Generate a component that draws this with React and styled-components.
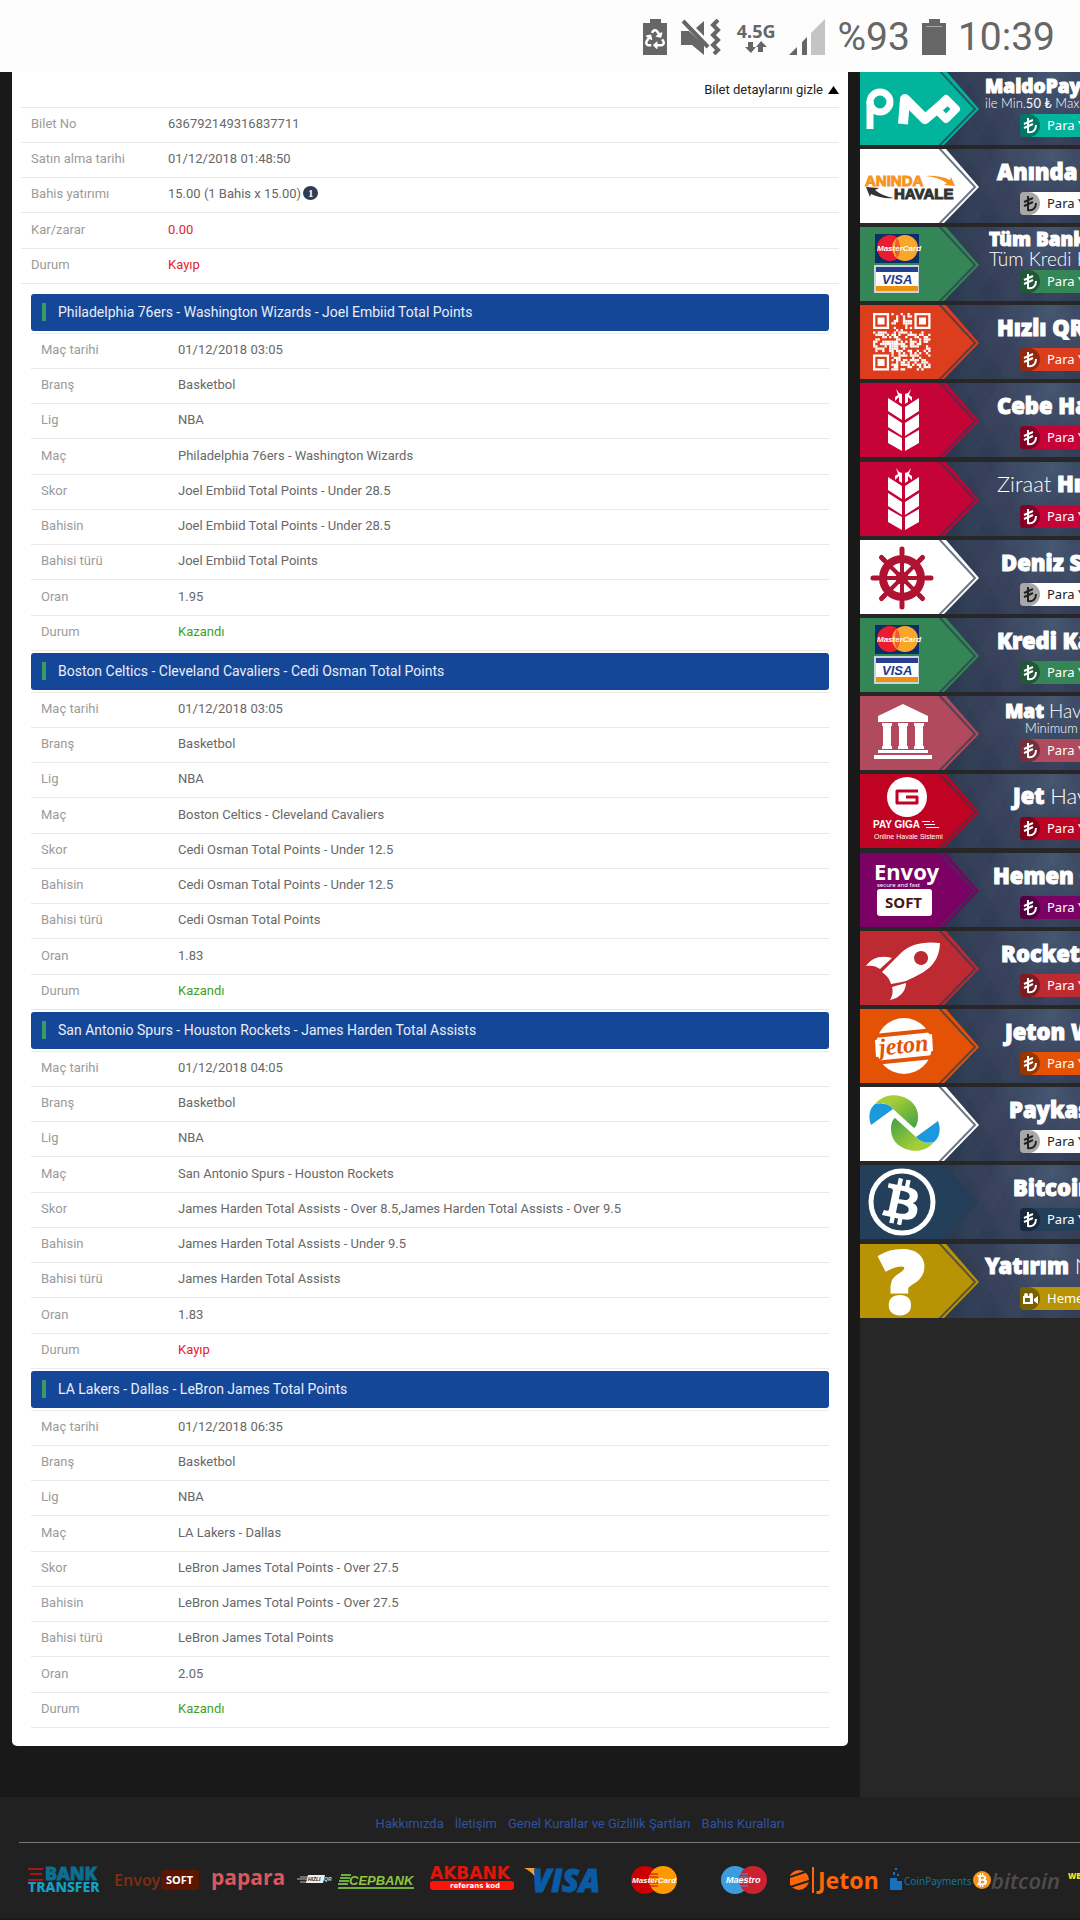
import React from 'react';
import styled, { createGlobalStyle, css } from 'styled-components';
import { FaBtc, FaRecycle } from 'react-icons/fa';

const GlobalStyle = createGlobalStyle`
  *, *::before, *::after {
    box-sizing: border-box;
  }

  body {
    margin: 0;
    background: #191919;
    font-family: Roboto, "Liberation Sans", sans-serif;
    font-size: 13px;
    line-height: 16px;
    overflow-x: hidden;
  }
`;

const titleFont = '"Noto Sans", "Open Sans", sans-serif';
const thinFont = 'Lato, "Open Sans", sans-serif';

/* ---------- status bar ---------- */

const StatusBar = styled.header`
  display: flex;
  align-items: center;
  justify-content: flex-end;
  gap: 12px;
  height: 72px;
  padding: 2px 25px 0;
  background: #fdfdfd;
  color: #666;
`;

const StatusIcons = styled.div`
  display: flex;
  align-items: center;
  gap: 14px;
`;

const StatusText = styled.span`
  font-size: 39px;
  line-height: 44px;
`;

const Network = styled.div`
  display: flex;
  flex-direction: column;
  align-items: center;
  font: 700 18px/20px ${titleFont};
`;

const BatteryShape = () => <path d="M0 4h7V0h11v4h6v32H0z" fill="#666" />;

const SavingIcon = () => (
  <svg width="24" height="36">
    <BatteryShape />
    <FaRecycle x="2" y="10" size={20} color="#fff" />
  </svg>
);

const BatteryIcon = () => (
  <svg width="24" height="36">
    <BatteryShape />
    <path d="M4 7.500h16" stroke="#aaa" />
  </svg>
);

const MuteIcon = () => (
  <svg width="42" height="36" fill="#666">
    <path d="M0 12h8l15 14v10L11 26H0zM23 2v15l-8-8z" />
    <path d="M2 2l25 26" stroke="#666" strokeWidth="4" />
    <path d="M37 1l-5 5 5 5-5 5 5 5-5 5 5 5-4 4" fill="none" stroke="#666" strokeWidth="4" />
  </svg>
);

const ArrowsIcon = () => (
  <svg width="24" height="12" fill="#666">
    <path d="M4 1h5v5h3l-5 6-6-6h3zM14 11h5V6h4l-6-6-5 6h2z" />
  </svg>
);

const SignalIcon = () => (
  <svg width="36" height="36" fill="#666">
    <path d="M0 36l8-8v8zM13 36V23l5-5v18z" />
    <path d="M22 36V14L36 0v36z" fill="#c4c4c4" />
  </svg>
);

/* ---------- ticket ---------- */

const Layout = styled.div`
  display: flex;
`;

const Main = styled.main`
  flex: 1;
  min-width: 0;
  padding: 0 12px 51px;
`;

const Ticket = styled.article`
  padding: 0 9px 18px;
  background: #fff;
  border-radius: 0 0 5px 5px;
`;

const TicketHead = styled.div`
  display: flex;
  justify-content: flex-end;
  height: 36px;
  border-bottom: 1px solid #e9e9e9;
`;

const ToggleButton = styled.button`
  display: flex;
  align-items: center;
  gap: 5px;
  padding: 0;
  border: 0;
  background: none;
  color: #222;
  font: inherit;
  cursor: pointer;
`;

const DetailTable = styled.table`
  width: 100%;
  border-spacing: 0;
  text-align: left;
  ${(p) => p.$bordered && 'border-top: 1px solid #ededed;'}
`;

const DetailRow = styled.tr`
  height: 35px;

  &:nth-child(4n) {
    height: 36px;
  }

  th,
  td {
    padding: 0 0 2px 10px;
    border-bottom: 1px solid #e9e9e9;
  }

  th {
    width: 137px;
    color: #9b9b9b;
    font-weight: 400;
  }
`;

const valueColors = { lost: '#e3242b', won: '#3f9f1c' };

const Value = styled.td`
  color: ${(p) => valueColors[p.$status] || '#686868'};
`;

const InfoButton = styled.button`
  width: 15px;
  height: 14px;
  margin-left: 2px;
  padding: 0;
  border: 0;
  border-radius: 50%;
  background: #333b52;
  color: #fff;
  font: 700 11px/14px "Liberation Serif", serif;
  vertical-align: top;
`;

const Bets = styled.div`
  display: flex;
  flex-direction: column;
  gap: 2px;
  padding: 10px 10px 0;
`;

const BetTitle = styled.h2`
  display: flex;
  align-items: center;
  gap: 12px;
  height: 37px;
  margin: 0 0 2px;
  padding: 0 11px 2px;
  border-radius: 3px;
  background: #154799;
  color: #e9eef8;
  font-size: 14px;
  font-weight: 400;

  &::before {
    content: '';
    width: 4px;
    height: 18px;
    background: #3a9a63;
  }
`;

const ticket = [
  ['Bilet No', '636792149316837711'],
  ['Satın alma tarihi', '01/12/2018 01:48:50'],
  ['Bahis yatırımı', '15.00 (1 Bahis x 15.00)', null, true],
  ['Kar/zarar', '0.00', 'lost'],
  ['Durum', 'Kayıp', 'lost'],
];

const bets = [
  {
    match: 'Philadelphia 76ers - Washington Wizards',
    market: 'Joel Embiid Total Points',
    date: '01/12/2018 03:05',
    score: 'Joel Embiid Total Points - Under 28.5',
    pick: 'Joel Embiid Total Points - Under 28.5',
    odds: '1.95',
    won: true,
  },
  {
    match: 'Boston Celtics - Cleveland Cavaliers',
    market: 'Cedi Osman Total Points',
    date: '01/12/2018 03:05',
    score: 'Cedi Osman Total Points - Under 12.5',
    pick: 'Cedi Osman Total Points - Under 12.5',
    odds: '1.83',
    won: true,
  },
  {
    match: 'San Antonio Spurs - Houston Rockets',
    market: 'James Harden Total Assists',
    date: '01/12/2018 04:05',
    score: 'James Harden Total Assists - Over 8.5,James Harden Total Assists - Over 9.5',
    pick: 'James Harden Total Assists - Under 9.5',
    odds: '1.83',
    won: false,
  },
  {
    match: 'LA Lakers - Dallas',
    market: 'LeBron James Total Points',
    date: '01/12/2018 06:35',
    score: 'LeBron James Total Points - Over 27.5',
    pick: 'LeBron James Total Points - Over 27.5',
    odds: '2.05',
    won: true,
  },
];

const Details = ({ rows, bordered }) => (
  <DetailTable $bordered={bordered}>
    <tbody>
      {rows.map(([label, value, status, info]) => (
        <DetailRow key={label}>
          <th scope="row">{label}</th>
          <Value $status={status}>
            {value}
            {info && <InfoButton type="button" aria-label="Bilgi">1</InfoButton>}
          </Value>
        </DetailRow>
      ))}
    </tbody>
  </DetailTable>
);

const Bet = ({ bet }) => (
  <section>
    <BetTitle>{`${bet.match} - ${bet.market}`}</BetTitle>
    <Details
      bordered
      rows={[
        ['Maç tarihi', bet.date],
        ['Branş', 'Basketbol'],
        ['Lig', 'NBA'],
        ['Maç', bet.match],
        ['Skor', bet.score],
        ['Bahisin', bet.pick],
        ['Bahisi türü', bet.market],
        ['Oran', bet.odds],
        ['Durum', bet.won ? 'Kazandı' : 'Kayıp', bet.won ? 'won' : 'lost'],
      ]}
    />
  </section>
);

/* ---------- payment logos ---------- */

const MaldoLogo = () => (
  <g fill="none" stroke="#fff">
    <circle cx="20" cy="31" r="10" strokeWidth="7" />
    <path d="M10 30v28" strokeWidth="7" />
    <path d="M43 53l2-25 20 20 20-17" strokeWidth="10" strokeLinejoin="round" />
    <path d="M86 28l10 10-10 10-10-10z" strokeWidth="8" strokeLinejoin="round" />
  </g>
);

const AnindaLogo = () => (
  <g fontFamily="Liberation Sans, sans-serif" fontWeight="700" fontSize="15">
    <text x="5" y="37" fill="#f7941d" stroke="#f7941d">ANINDA</text>
    <text x="34" y="50" fill="#333" stroke="#333">HAVALE</text>
    <path d="M65 27q14-1 25 4l1-3 4 9-11-1 3-2q-9-6-22-7z" fill="#f7941d" />
    <path d="M34 49q-13 1-23-4l-1 3-4-10 13 1-4 2q7 6 19 8z" fill="#333" />
  </g>
);

const CardsLogo = () => (
  <g fontFamily="Liberation Sans, sans-serif" fontWeight="700" fontStyle="italic">
    <path d="M15 7h44v29H15z" fill="#0c2d6b" />
    <circle cx="30" cy="21" r="13" fill="#ea1c2d" />
    <circle cx="45" cy="21" r="13" fill="#f9a72b" />
    <path d="M37 11c-3 5-3 15 0 20 4-5 4-15 0-20" fill="#ef5b2c" />
    <text x="17" y="24" fontSize="8" fill="#fff">MasterCard</text>
    <path d="M14 38h45v28H14z" fill="#c9d4dd" />
    <path d="M16 40h42v24H16z" fill="#fff" />
    <path d="M16 40h42v5H16z" fill="#26408f" />
    <path d="M16 59h42v5H16z" fill="#ea9211" />
    <text x="22" y="57" fontSize="13" fill="#223a8c">VISA</text>
  </g>
);

const isFinder = (x, y) => (x < 8 && y < 8) || (x > 16 && y < 8) || (x < 8 && y > 16);

const isDark = (x, y) => {
  const n = Math.sin(x * 12.9898 + y * 78.233) * 43758.5453;
  return n - Math.floor(n) < 0.52;
};

const qrCells = Array.from({ length: 625 }, (_, i) => [i % 25, Math.floor(i / 25)]).filter(
  ([x, y]) => !isFinder(x, y) && isDark(x, y),
);

const QrLogo = () => (
  <g transform="translate(13 8) scale(2.3)" fill="#fff">
    {[[0, 0], [18, 0], [0, 18]].map(([x, y]) => (
      <path key={`${x}-${y}`} transform={`translate(${x} ${y})`} fillRule="evenodd" d="M0 0h7v7H0zM1 1v5h5V1zM2 2h3v3H2z" />
    ))}
    {qrCells.map(([x, y]) => <rect key={`${x}-${y}`} x={x} y={y} width="1" height="1" />)}
  </g>
);

const leaf = 'M28 15l14 9v13l-14-9zM28 31l14 9v13l-14-9zM28 47l14 8v13l-14-8z';
const awn = 'M36 6l3 4 3 1v10l-3-2v-5l-4 4v-4l3-2z';

const WheatLogo = () => (
  <g fill="#fff">
    <path d={leaf} />
    <path d={awn} />
    <g transform="translate(87 0) scale(-1 1)">
      <path d={leaf} />
      <path d={awn} />
    </g>
  </g>
);

const WheelLogo = () => (
  <g transform="translate(42 38)" stroke="#b01232" strokeLinecap="round">
    <circle r="19" fill="none" strokeWidth="8" />
    <circle r="6" fill="#b01232" />
    {[0, 45, 90, 135].map((deg) => (
      <g key={deg} transform={`rotate(${deg})`}>
        <path d="M-29 0h58" strokeWidth="4" />
        <path d="M-29 0h5M24 0h5" strokeWidth="5" />
      </g>
    ))}
  </g>
);

const BankLogo = () => (
  <g fill="#fff">
    <path d="M18 20L43 8l25 12v6H18zM18 54h50v3H18zM14 59h58v4H14z" />
    {[22, 38, 54].map((x) => (
      <path key={x} d={`M${x} 27h10v3h-1v20h1v3h-10v-3h1V30h-1z`} />
    ))}
  </g>
);

const GigaLogo = () => (
  <g fill="#fff" fontFamily="Liberation Sans, sans-serif">
    <circle cx="47" cy="23" r="20" />
    <path d="M58 17H37v12h20v-6H46" fill="none" stroke="#c00323" strokeWidth="3" strokeLinejoin="round" />
    <text x="13" y="54" fontSize="10" fontWeight="700">PAY GIGA</text>
    <path d="M62 47h8v1h-8zM64 50h11v1H64zM66 53h13v1H66zM72 47h2v1h-2z" />
    <text x="14" y="65" fontSize="7">Online Havale Sistemi</text>
  </g>
);

const EnvoyLogo = () => (
  <g fill="#fff" fontFamily="Noto Sans, sans-serif" fontWeight="700">
    <text x="14" y="27" fontSize="22">Envoy</text>
    <text x="17" y="34" fontSize="6" fontWeight="400">secure and fast</text>
    <rect x="17" y="36" width="55" height="27" rx="3" />
    <text x="25" y="55" fontSize="15" fill="#4b1512">SOFT</text>
  </g>
);

const RocketLogo = () => (
  <g fill="#fff">
    <path
      fillRule="evenodd"
      d="M80 12C62 10 50 14 42 21L22 41c4 3 8 7 9 12 6-1 11-2 15-3 20-9 33-16 34-38zM61 20a7 7 0 1 0 .1 0z"
    />
    <path d="M6 35c6-9 16-11 26-8L20 38c-4-3-8-4-14-3zM32 56l14-4c0 8-6 15-16 17 3-5 3-9 2-13z" />
  </g>
);

const JetonLogo = () => (
  <g>
    <circle cx="44" cy="37" r="28" fill="#fff" />
    <path d="M14 27l60-6M14 54l60-6" stroke="#e45305" strokeWidth="4" />
    <path d="M15 31l57-6 1 17-57 6z" fill="#fff" />
    <text
      x="19"
      y="44"
      transform="rotate(-6 44 37)"
      fontFamily="Liberation Serif, serif"
      fontWeight="700"
      fontStyle="italic"
      fontSize="24"
      fill="#e45305"
    >
      jeton
    </text>
  </g>
);

const swirl = (
  <>
    <path d="M15 17C22 8 34 7 40 9c12 3 18 11 18 21 0 6-2 10-4 11L33 22c-5-6-13-7-18-5z" fill="url(#leafGreen)" />
    <path d="M11 38c-3-8-2-16 4-21 7-2 14 0 18 5z" fill="#1c98dc" />
  </>
);

const PaykasaLogo = () => (
  <g>
    <defs>
      <linearGradient id="leafGreen" x1="0" y1="0" x2="1" y2="1">
        <stop offset="0.300" stopColor="#a5cd36" />
        <stop offset="1" stopColor="#3fa047" />
      </linearGradient>
    </defs>
    {swirl}
    <g transform="rotate(180 44.5 36)">{swirl}</g>
  </g>
);

const BitcoinLogo = () => (
  <g>
    <circle cx="42" cy="37" r="31" fill="none" stroke="#fff" strokeWidth="5" />
    <g transform="rotate(12 42 37)">
      <FaBtc x="19" y="14" size={46} color="#fff" />
    </g>
  </g>
);

const QuestionLogo = () => (
  <text
    x="21"
    y="68"
    fontFamily="Noto Sans, sans-serif"
    fontWeight="900"
    fontSize="84"
    fill="#fff"
    stroke="#fff"
    strokeWidth="5"
  >
    ?
  </text>
);

/* ---------- sidebar ---------- */

const Sidebar = styled.aside`
  flex: 0 0 220px;
  overflow: hidden;
  background: #272727;
`;

const BannerLink = styled.a`
  display: flex;
  align-items: flex-end;
  height: 74px;
  margin-bottom: 4px;
  overflow: hidden;
  background:
    repeating-linear-gradient(60deg, transparent 0 18px, rgba(255, 255, 255, 0.012) 18px 36px),
    repeating-linear-gradient(-60deg, transparent 0 18px, rgba(255, 255, 255, 0.012) 18px 36px),
    radial-gradient(circle at 190px 8px, #43546f, #363f59 60px, #2b3a50 110px);
  color: #fff;
  text-decoration: none;
  white-space: nowrap;

  &:nth-child(5n) {
    margin-bottom: 5px;
  }

  &:first-child {
    height: 73px;
  }
`;

const BannerArt = styled.svg`
  flex: none;
  width: 120px;
  height: 74px;
`;

const BannerBody = styled.div`
  display: flex;
  flex-direction: column;
  height: 74px;
  padding-bottom: 8px;
`;

const BannerTitle = styled.div`
  display: flex;
  flex: 1;
  flex-direction: column;
  justify-content: center;
  padding-left: ${(p) => p.$indent}px;
  font: 900 22px/22px ${titleFont};
  -webkit-text-stroke: 1px #fff;
`;

const TitleLine = styled.span`
  ${(p) => p.$compact && 'font-size: 19px; line-height: 20px;'}
`;

const Thin = styled.span`
  font-family: ${thinFont};
  font-weight: 300;
  -webkit-text-stroke: 0;
`;

const subSizes = {
  small: css`
    font-size: 13px;
    line-height: 14px;
  `,
  large: css`
    font-size: 19px;
    line-height: 19px;
  `,
};

const Subtitle = styled(Thin)`
  padding-left: ${(p) => (p.$inset ? 20 : 0)}px;
  ${(p) => subSizes[p.$size]}
`;

const Pill = styled.span`
  display: flex;
  gap: 7px;
  width: 124px;
  height: 23px;
  margin-left: 40px;
  border-radius: 4px;
  background: ${(p) => p.$color};
  color: ${(p) => (p.$dark ? '#222' : '#fff')};
  font: 400 13px/22px ${titleFont};
`;

const PillIcon = styled.svg`
  flex: none;
  width: 20px;
  height: 23px;
  border-radius: 4px 12px 12px 4px;
  background: rgba(0, 0, 0, 0.340);
`;

const banners = [
  { title: 'MaldoPay', sub: <>ile Min.<b>50 ₺</b> Max.<b>5000 ₺</b></>, subSize: 'small', indent: 5, color: '#02b49c', Logo: MaldoLogo },
  { title: 'Anında Havale', indent: 17, color: '#ffffff', Logo: AnindaLogo },
  { title: 'Tüm Bankalar', sub: 'Tüm Kredi Kartları', subSize: 'large', indent: 9, color: '#348656', Logo: CardsLogo },
  { title: 'Hızlı QR', indent: 17, color: '#dc3d1c', Logo: QrLogo },
  { title: 'Cebe Havale', indent: 17, color: '#c60337', Logo: WheatLogo },
  { title: <><Thin>Ziraat</Thin> Hızlı</>, indent: 17, color: '#c60337', Logo: WheatLogo },
  { title: 'Deniz Santral', indent: 21, color: '#ffffff', Logo: WheelLogo },
  { title: 'Kredi Kartı', indent: 17, color: '#348656', Logo: CardsLogo },
  { title: <>Mat <Thin>Havale</Thin></>, sub: 'Minimum', subSize: 'small', subInset: true, indent: 25, color: '#b04a5c', Logo: BankLogo },
  { title: <>Jet <Thin>Havale</Thin></>, indent: 33, color: '#c00323', Logo: GigaLogo },
  { title: 'Hemen Öde', indent: 13, color: '#7c0165', Logo: EnvoyLogo },
  { title: 'RocketPay', indent: 21, color: '#bd2a32', Logo: RocketLogo },
  { title: 'Jeton Wallet', indent: 25, color: '#e45305', Logo: JetonLogo },
  { title: 'Paykasa', indent: 29, color: '#ffffff', Logo: PaykasaLogo },
  { title: 'Bitcoin', indent: 33, color: '#233f5a', Logo: BitcoinLogo },
  { title: <>Yatırım <Thin>Nasıl</Thin></>, indent: 5, color: '#b89304', Logo: QuestionLogo, action: 'Hemen İzle' },
];

const LiraIcon = () => (
  <path d="M8 4v14c5 1 8-2 8-7M4 10l9-4M4 14l9-4" fill="none" stroke="currentColor" strokeWidth="2" />
);

const CameraIcon = () => (
  <g fill="currentColor">
    <path fillRule="evenodd" d="M3 9h10v8H3zM5 11v4h5v-4zM14 12l4-3v8l-4-3z" />
    <circle cx="6" cy="8" r="2" />
    <circle cx="11" cy="8" r="2" />
  </g>
);

const Banner = ({ banner }) => {
  const { title, sub, subSize, subInset, indent, color, Logo, action } = banner;
  return (
    <BannerLink href="#">
      <BannerArt viewBox="0 0 120 74" aria-hidden="true">
        <path d="M0 0h86l33 38-35 36H0z" fill={color} />
        <path d="M79 -1l36 39-36 37" fill="none" stroke="#2d3a50" strokeOpacity="0.700" strokeWidth="2" />
        <Logo />
      </BannerArt>
      <BannerBody>
        <BannerTitle $indent={indent}>
          <TitleLine $compact={!!sub}>{title}</TitleLine>
          {sub && <Subtitle $size={subSize} $inset={subInset}>{sub}</Subtitle>}
        </BannerTitle>
        <Pill $color={color} $dark={color === '#ffffff'}>
          <PillIcon>{action ? <CameraIcon /> : <LiraIcon />}</PillIcon>
          {action || 'Para Yatır'}
        </Pill>
      </BannerBody>
    </BannerLink>
  );
};

/* ---------- footer ---------- */

const Footer = styled.footer`
  padding: 0 0 16px 19px;
  background: #212121;
  overflow: hidden;
`;

const FooterNav = styled.nav`
  display: flex;
  justify-content: center;
  gap: 11px;
  padding: 19px 0 10px 61px;
  border-bottom: 1px solid #777;

  a {
    color: #2d52a5;
    text-decoration: none;
  }
`;

const Logos = styled.div`
  display: flex;
  padding: 16px 0 1px 9px;

  > svg {
    flex: none;
    height: 42px;
  }
`;

const PaymentLogos = () => (
  <Logos>
    <svg width="82" role="img" aria-label="Bank Transfer" fontFamily="Noto Sans, sans-serif" fontWeight="800">
      <path d="M0 9h15v2H0zM2 14h12v2H2zM0 20h15v2H0z" fill="#a51519" />
      <text x="17" y="21" fontSize="18" fill="#0b6f94" stroke="#0b6f94">BANK</text>
      <text x="0" y="33" fontSize="14" fill="#12a2c9">TRANSFER</text>
    </svg>
    <svg width="101" role="img" aria-label="Envoysoft" fontFamily="Noto Sans, sans-serif">
      <text x="4" y="27" fontSize="16" fontWeight="600" fill="#7f2c0f">Envoy</text>
      <rect x="51" y="11" width="38" height="20" rx="3" fill="#5d1500" />
      <text x="56" y="25" fontSize="11" fontWeight="700" fill="#fff">SOFT</text>
    </svg>
    <svg width="86" role="img" aria-label="Papara">
      <text x="0" y="26" fontFamily="Open Sans, sans-serif" fontSize="21" fontWeight="700" fill="#d9575f">papara</text>
    </svg>
    <svg width="41" role="img" aria-label="Hızlı QR" fontFamily="Liberation Sans, sans-serif" fontWeight="700" fontStyle="italic">
      <path d="M3 18h8M0 20h10M3 23h7" stroke="#bbb" />
      <path d="M11 16h17l-2 8H9z" fill="#eee" />
      <text x="11" y="22" fontSize="5" fill="#222">HIZLI</text>
      <text x="27" y="22" fontSize="5" fill="#ddd">QR</text>
    </svg>
    <svg width="92" role="img" aria-label="Cepbank">
      <path d="M3 16h10M2 19h10M1 22h10M0 25h10M0 29h76" stroke="#6fae3a" strokeWidth="2" />
      <text x="11" y="26" fontFamily="Liberation Sans, sans-serif" fontSize="13" fontWeight="700" fontStyle="italic" fill="#8dc63f">CEPBANK</text>
    </svg>
    <svg width="92" role="img" aria-label="Akbank referans kod" fontFamily="DejaVu Sans, sans-serif" fontWeight="700">
      <text x="0" y="20" fontSize="17" fill="#e2150b">AKBANK</text>
      <rect x="0" y="22" width="84" height="9" rx="3" fill="#fb1407" />
      <text x="20" y="29" fontSize="7" fill="#fff">referans kod</text>
    </svg>
    <svg width="108" role="img" aria-label="Visa">
      <path d="M2 9h10c4 1 5 7 6 15C13 17 9 12 2 9z" fill="#f0a32c" />
      <text x="10" y="33" fontFamily="Open Sans, sans-serif" fontSize="31" fontWeight="800" fontStyle="italic" fill="#0a5ba6" stroke="#0a5ba6">VISA</text>
    </svg>
    <svg width="90" role="img" aria-label="MasterCard">
      <circle cx="15" cy="21" r="14" fill="#cc0000" />
      <circle cx="33" cy="21" r="14" fill="#ff9900" />
      <path d="M20 15h8M20 18h8M20 21h8M20 24h8M20 27h8" stroke="#cc0000" />
      <text x="2" y="24" fontFamily="Liberation Sans, sans-serif" fontSize="8" fontWeight="700" fontStyle="italic" fill="#fff">MasterCard</text>
    </svg>
    <svg width="70" role="img" aria-label="Maestro">
      <circle cx="15" cy="21" r="14" fill="#3c9ddc" />
      <circle cx="33" cy="21" r="14" fill="#cc2131" />
      <path d="M20 15h8M20 18h8M20 21h8M20 24h8M20 27h8" stroke="#3c9ddc" />
      <text x="6" y="24" fontFamily="Liberation Sans, sans-serif" fontSize="9" fontWeight="700" fontStyle="italic" fill="#fff">Maestro</text>
    </svg>
    <svg width="99" role="img" aria-label="Jeton" fill="#ff6509">
      <circle cx="9" cy="21" r="10" />
      <path d="M0 18l18-6M0 28l19-6" stroke="#212121" strokeWidth="2" />
      <path d="M22 8h2v26h-2z" />
      <text x="28" y="30" fontFamily="Noto Sans, sans-serif" fontSize="23" fontWeight="700">Jeton</text>
    </svg>
    <svg width="84" role="img" aria-label="CoinPayments">
      <path d="M1 19h7v3h5v9H1zM4 13h2v3H4zM8 15h2v2H8zM6 9h2v2H6z" fill="#1871bd" />
      <text x="15" y="26" fontFamily="Noto Sans, sans-serif" fontSize="10" fill="#14739f">CoinPayments</text>
    </svg>
    <svg width="95" role="img" aria-label="Bitcoin">
      <circle cx="9" cy="21" r="9" fill="#f7931a" />
      <FaBtc x="2" y="14" size={14} color="#fff" />
      <text x="18" y="30" fontFamily="Open Sans, sans-serif" fontSize="22" fontWeight="600" fontStyle="italic" fill="#4d4d4d">bitcoin</text>
    </svg>
    <svg width="60" role="img" aria-label="WebMoney">
      <text x="0" y="20" fontFamily="Noto Sans, sans-serif" fontSize="8" fontWeight="900" fill="#f5e21c">WEBMONEY</text>
    </svg>
  </Logos>
);

const App = () => (
  <>
    <GlobalStyle />
    <StatusBar>
      <StatusIcons>
        <SavingIcon />
        <MuteIcon />
        <Network>
          4.5G
          <ArrowsIcon />
        </Network>
        <SignalIcon />
      </StatusIcons>
      <StatusText>%93</StatusText>
      <BatteryIcon />
      <StatusText>10:39</StatusText>
    </StatusBar>
    <Layout>
      <Main>
        <Ticket>
          <TicketHead>
            <ToggleButton type="button">
              Bilet detaylarını gizle
              <svg width="11" height="8"><path d="M0 8l5.500-8L11 8z" /></svg>
            </ToggleButton>
          </TicketHead>
          <Details rows={ticket} />
          <Bets>
            {bets.map((bet) => <Bet key={bet.match} bet={bet} />)}
          </Bets>
        </Ticket>
      </Main>
      <Sidebar>
        {banners.map((banner, i) => <Banner key={i} banner={banner} />)}
      </Sidebar>
    </Layout>
    <Footer>
      <FooterNav>
        <a href="#">Hakkımızda</a>
        <a href="#">İletişim</a>
        <a href="#">Genel Kurallar ve Gizlilik Şartları</a>
        <a href="#">Bahis Kuralları</a>
      </FooterNav>
      <PaymentLogos />
    </Footer>
  </>
);

export default App;
